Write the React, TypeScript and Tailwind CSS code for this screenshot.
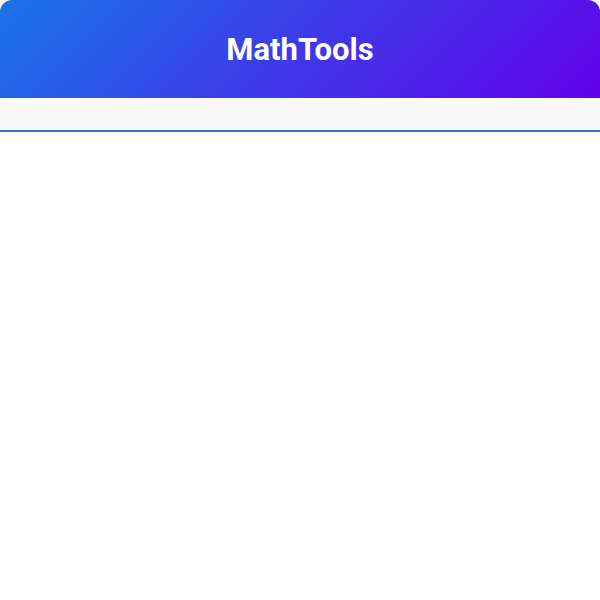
import React from "react";

export default function App() {
  return (
    <div className="w-[600px] h-[600px] bg-white" style={{ fontFamily: "Roboto, 'Noto Sans', sans-serif" }}>
      <header className="h-[98px] rounded-t-[12px] bg-[linear-gradient(135deg,#1a73e8,#6200ea)] flex items-center justify-center">
        <h1 className="text-[31px] font-bold text-white leading-none">MathTools</h1>
      </header>
      <nav className="h-[34px] bg-[#f9f9f9] border-b-2 border-[#2f76d2]"></nav>
    </div>
  );
}
